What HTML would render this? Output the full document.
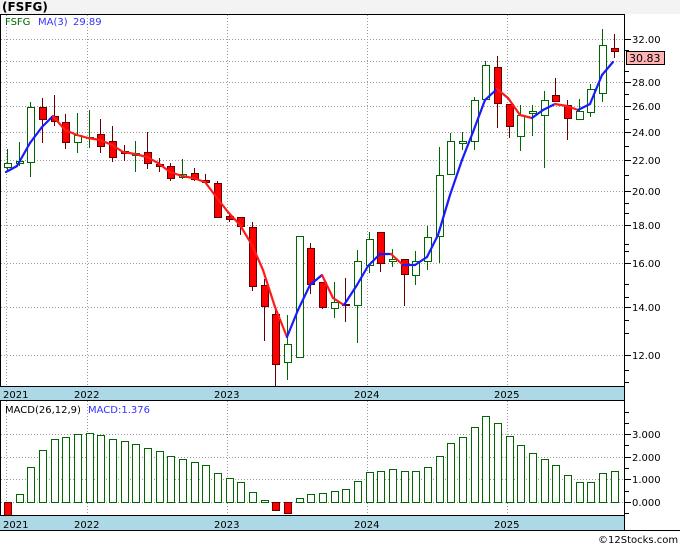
<!DOCTYPE html>
<html><head><meta charset="utf-8"><style>
body{margin:0;width:680px;height:546px;overflow:hidden;background:#fff}
svg{display:block}
text{font-family:"DejaVu Sans","Liberation Sans",sans-serif;font-size:10px}
</style></head><body>
<svg id="s" width="680" height="546" xmlns="http://www.w3.org/2000/svg">
<rect x="0" y="0" width="680" height="14" fill="#f3f3f3"/>
<text x="2" y="11" style="font-size:12px;font-weight:bold" fill="#000">(FSFG)</text>
<g id="grid" stroke="#999" stroke-dasharray="1,2" stroke-width="1"></g>
<g id="cd"></g>
<g id="ma" fill="none" stroke-width="2.2" stroke-linejoin="round"></g>
<g id="mb"></g>
<rect x="0.5" y="14.5" width="624" height="372" fill="none" stroke="#000"/>
<rect x="0" y="387" width="625" height="13" fill="#add8e6"/>
<line x1="0" y1="386.5" x2="625" y2="386.5" stroke="#000"/>
<line x1="0" y1="400.5" x2="625" y2="400.5" stroke="#000"/>
<rect x="0.5" y="400.5" width="624" height="115" fill="none" stroke="#000"/>
<rect x="0" y="516" width="625" height="14" fill="#add8e6"/>
<line x1="0" y1="530.5" x2="680" y2="530.5" stroke="#000"/>
<line x1="624.5" y1="14" x2="624.5" y2="531" stroke="#000"/>
<g fill="#000">
<text x="3" y="398">2021</text><text x="74" y="398">2022</text><text x="214" y="398">2023</text><text x="354" y="398">2024</text><text x="494" y="398">2025</text>
<text x="3" y="528">2021</text><text x="74" y="528">2022</text><text x="214" y="528">2023</text><text x="354" y="528">2024</text><text x="494" y="528">2025</text>
</g>
<text x="5" y="25" fill="#006600">FSFG</text>
<text x="38" y="25" fill="#3333ff">MA(3)</text>
<text x="73" y="25" fill="#3333ff">29.89</text>
<text x="5" y="413" fill="#000">MACD(26,12,9)</text>
<text x="88" y="413" fill="#3333ff">MACD:1.376</text>
<g id="ax" fill="#000"></g>
<rect x="626.5" y="51.5" width="38" height="13" fill="#ffb3b3" stroke="#000"/>
<text x="629" y="62" fill="#000" style="font-size:11px">30.83</text>
<text x="598" y="543" fill="#000">©12Stocks.com</text>
</svg>
<script>
var NS="http://www.w3.org/2000/svg";
function el(p,t,a){var e=document.createElementNS(NS,t);for(var k in a)e.setAttribute(k,a[k]);document.getElementById(p).appendChild(e);return e;}
var hg=[39,61,82,106,132,160,191,225,263,307,355];
hg.forEach(function(y){el("grid","line",{x1:1,x2:624,y1:y+.5,y2:y+.5});});
[6,87,227,367,507].forEach(function(x){el("grid","line",{x1:x+.5,x2:x+.5,y1:15,y2:386});el("grid","line",{x1:x+.5,x2:x+.5,y1:401,y2:515});});
[434,457,479,502].forEach(function(y){el("grid","line",{x1:1,x2:624,y1:y+.5,y2:y+.5});});
var labs=[[39,"32.00"],[82,"28.00"],[106,"26.00"],[132,"24.00"],[160,"22.00"],[191,"20.00"],[225,"18.00"],[263,"16.00"],[307,"14.00"],[355,"12.00"]];
labs.forEach(function(l){el("ax","line",{x1:625,x2:631,y1:l[0]+.5,y2:l[0]+.5,stroke:"#000"});var t=el("ax","text",{x:632,y:l[0]+4});t.textContent=l[1];});
[50,71,94,119,146,175,203,213,244,251,284,297,320,333,370,382].forEach(function(y){el("ax","line",{x1:625,x2:629,y1:y+.5,y2:y+.5,stroke:"#000"});});
[[434,"3.000"],[457,"2.000"],[479,"1.000"],[502,"0.000"]].forEach(function(l){el("ax","line",{x1:625,x2:631,y1:l[0]+.5,y2:l[0]+.5,stroke:"#000"});var t=el("ax","text",{x:632,y:l[0]+4});t.textContent=l[1];});
[412,423,445,468,491,513].forEach(function(y){el("ax","line",{x1:625,x2:629,y1:y+.5,y2:y+.5,stroke:"#000"});});
var C=[[163,167,149,171,"g"],[161,163,142,166,"g"],[107,162,102,177,"g"],[107,119,98,143,"r"],[116,121,95,126,"r"],[122,142,114,149,"r"],[135,142,113,153,"g"],[137,138,110,148,"g"],[134,146,119,153,"r"],[141,157,126,162,"r"],[151,153,145,161,"r"],[153,155,141,172,"g"],[152,163,132,169,"r"],[164,166,158,172,"r"],[166,178,163,181,"r"],[174,177,159,179,"g"],[173,179,168,181,"r"],[180,182,174,184,"r"],[183,217,181,218,"r"],[216,219,214,222,"r"],[217,226,217,235,"r"],[227,286,222,291,"r"],[285,306,279,341,"r"],[314,364,306,387,"r"],[344,362,315,380,"g"],[236,357,236,357,"g"],[248,284,243,294,"r"],[282,307,282,309,"r"],[302,308,282,318,"g"],[304,305,278,322,"r"],[261,305,250,343,"g"],[239,265,232,273,"g"],[232,263,232,272,"r"],[259,261,249,267,"g"],[259,274,259,306,"r"],[261,275,251,285,"g"],[237,261,226,270,"g"],[175,236,147,263,"g"],[141,174,133,175,"g"],[141,143,132,150,"g"],[100,141,97,150,"g"],[65,99,61,99,"g"],[67,103,56,128,"r"],[104,126,104,138,"r"],[115,136,105,151,"g"],[111,113,105,136,"g"],[100,115,91,168,"g"],[95,101,78,101,"r"],[105,118,100,140,"r"],[111,119,99,120,"g"],[89,112,84,117,"g"],[45,93,29,102,"g"],[48,51,34,58,"r"]];
C.forEach(function(c,i){var x=Math.round(7+11.667*i);var col=c[4]=="g"?"#006600":"#660000";
el("cd","line",{x1:x+.5,x2:x+.5,y1:c[2],y2:c[3],stroke:col});
el("cd","rect",{x:x-3+.5,y:c[0]+.5,width:7,height:Math.max(1,c[1]-c[0]),fill:c[4]=="g"?"#fff":"#f00",stroke:col});});
var M=[[6,172],[17,166],[30,143],[42,127],[53,116],[65,130],[77,135],[88,138],[100,140],[112,145],[123,152],[135,154],[147,157],[158,163],[170,172],[182,176],[193,178],[205,182],[217,198],[228,212],[240,225],[252,245],[263,270],[275,307],[287,337],[298,310],[310,285],[322,275],[333,298],[344,305],[357,285],[368,266],[380,254],[391,254],[403,265],[415,265],[427,257],[438,235],[450,195],[462,160],[473,132],[485,100],[497,89],[508,98],[520,115],[532,118],[543,110],[555,104],[567,106],[578,110],[590,104],[602,75],[613,62]];
for(var i=1;i<M.length;i++){el("ma","line",{x1:M[i-1][0],y1:M[i-1][1],x2:M[i][0],y2:M[i][1],stroke:M[i][1]>M[i-1][1]?"#ff1a1a":"#1a1aff","stroke-linecap":"round"});}
var B=[515,494,467,450,439,437,434,433,435,439,441,444,448,451,456,459,462,465,473,478,482,492,500,510,513,498,494,493,491,489,481,472,471,469,471,471,467,456,443,437,427,416,423,436,445,453,459,465,475,482,482,473,471];
B.forEach(function(y,i){var x=Math.round(7+11.667*i);var neg=y>502;
el("mb","rect",{x:x-3+.5,y:(neg?502:y)+.5,width:7,height:Math.abs(y-502),fill:neg?"#f00":"#fff",stroke:neg?"#660000":"#006600"});});
</script>
</body></html>
